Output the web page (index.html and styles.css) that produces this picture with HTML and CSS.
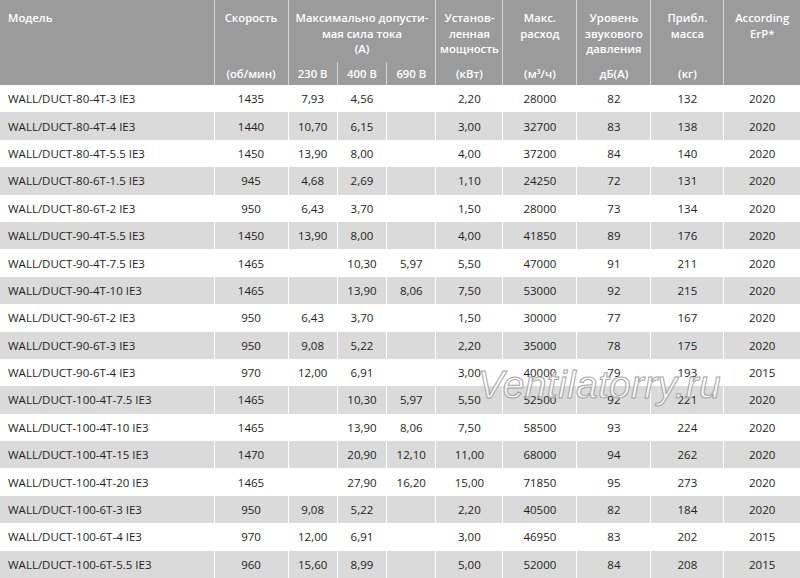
FILE: index.html
```html
<!DOCTYPE html>
<html lang="ru">
<head>
<meta charset="utf-8">
<title>WALL/DUCT</title>
<link rel="stylesheet" href="styles.css">
</head>
<body>
<div class="sheet">
<table class="spec">
  <colgroup>
    <col class="c-model"><col class="c-speed"><col class="c-a"><col class="c-a"><col class="c-a">
    <col class="c-pow"><col class="c-flow"><col class="c-noise"><col class="c-mass"><col class="c-erp">
  </colgroup>
  <thead>
    <tr class="h1">
      <th class="left" rowspan="2">Модель</th>
      <th>Скорость</th>
      <th colspan="3">Максимально допусти-<br>мая сила тока<br>(А)</th>
      <th>Установ-<br>ленная<br>мощность</th>
      <th>Макс.<br>расход</th>
      <th>Уровень<br>звукового<br>давления</th>
      <th>Прибл.<br>масса</th>
      <th rowspan="2">According<br>ErP*</th>
    </tr>
    <tr class="h2">
      <th>(об/мин)</th>
      <th>230 В</th>
      <th>400 В</th>
      <th>690 В</th>
      <th>(кВт)</th>
      <th>(м<sup>3</sup>/ч)</th>
      <th>дБ(А)</th>
      <th>(кг)</th>
    </tr>
  </thead>
  <tbody>
    <tr><td class="left">WALL/DUCT-80-4T-3 IE3</td><td>1435</td><td>7,93</td><td>4,56</td><td></td><td>2,20</td><td>28000</td><td>82</td><td>132</td><td>2020</td></tr>
    <tr><td class="left">WALL/DUCT-80-4T-4 IE3</td><td>1440</td><td>10,70</td><td>6,15</td><td></td><td>3,00</td><td>32700</td><td>83</td><td>138</td><td>2020</td></tr>
    <tr><td class="left">WALL/DUCT-80-4T-5.5 IE3</td><td>1450</td><td>13,90</td><td>8,00</td><td></td><td>4,00</td><td>37200</td><td>84</td><td>140</td><td>2020</td></tr>
    <tr><td class="left">WALL/DUCT-80-6T-1.5 IE3</td><td>945</td><td>4,68</td><td>2,69</td><td></td><td>1,10</td><td>24250</td><td>72</td><td>131</td><td>2020</td></tr>
    <tr><td class="left">WALL/DUCT-80-6T-2 IE3</td><td>950</td><td>6,43</td><td>3,70</td><td></td><td>1,50</td><td>28000</td><td>73</td><td>134</td><td>2020</td></tr>
    <tr><td class="left">WALL/DUCT-90-4T-5.5 IE3</td><td>1450</td><td>13,90</td><td>8,00</td><td></td><td>4,00</td><td>41850</td><td>89</td><td>176</td><td>2020</td></tr>
    <tr><td class="left">WALL/DUCT-90-4T-7.5 IE3</td><td>1465</td><td></td><td>10,30</td><td>5,97</td><td>5,50</td><td>47000</td><td>91</td><td>211</td><td>2020</td></tr>
    <tr><td class="left">WALL/DUCT-90-4T-10 IE3</td><td>1465</td><td></td><td>13,90</td><td>8,06</td><td>7,50</td><td>53000</td><td>92</td><td>215</td><td>2020</td></tr>
    <tr><td class="left">WALL/DUCT-90-6T-2 IE3</td><td>950</td><td>6,43</td><td>3,70</td><td></td><td>1,50</td><td>30000</td><td>77</td><td>167</td><td>2020</td></tr>
    <tr><td class="left">WALL/DUCT-90-6T-3 IE3</td><td>950</td><td>9,08</td><td>5,22</td><td></td><td>2,20</td><td>35000</td><td>78</td><td>175</td><td>2020</td></tr>
    <tr><td class="left">WALL/DUCT-90-6T-4 IE3</td><td>970</td><td>12,00</td><td>6,91</td><td></td><td>3,00</td><td>40000</td><td>79</td><td>193</td><td>2015</td></tr>
    <tr><td class="left">WALL/DUCT-100-4T-7.5 IE3</td><td>1465</td><td></td><td>10,30</td><td>5,97</td><td>5,50</td><td>52500</td><td>92</td><td>221</td><td>2020</td></tr>
    <tr><td class="left">WALL/DUCT-100-4T-10 IE3</td><td>1465</td><td></td><td>13,90</td><td>8,06</td><td>7,50</td><td>58500</td><td>93</td><td>224</td><td>2020</td></tr>
    <tr><td class="left">WALL/DUCT-100-4T-15 IE3</td><td>1470</td><td></td><td>20,90</td><td>12,10</td><td>11,00</td><td>68000</td><td>94</td><td>262</td><td>2020</td></tr>
    <tr><td class="left">WALL/DUCT-100-4T-20 IE3</td><td>1465</td><td></td><td>27,90</td><td>16,20</td><td>15,00</td><td>71850</td><td>95</td><td>273</td><td>2020</td></tr>
    <tr><td class="left">WALL/DUCT-100-6T-3 IE3</td><td>950</td><td>9,08</td><td>5,22</td><td></td><td>2,20</td><td>40500</td><td>82</td><td>184</td><td>2020</td></tr>
    <tr><td class="left">WALL/DUCT-100-6T-4 IE3</td><td>970</td><td>12,00</td><td>6,91</td><td></td><td>3,00</td><td>46950</td><td>83</td><td>202</td><td>2015</td></tr>
    <tr><td class="left">WALL/DUCT-100-6T-5.5 IE3</td><td>960</td><td>15,60</td><td>8,99</td><td></td><td>5,00</td><td>52000</td><td>84</td><td>208</td><td>2015</td></tr>
  </tbody>
</table>
<div class="watermark">Ventilatorry.ru</div>
</div>
</body>
</html>
```

FILE: styles.css
```css
html, body {
  margin: 0;
  padding: 0;
  background: #ffffff;
}
.sheet {
  position: relative;
  width: 800px;
  height: 578px;
  overflow: hidden;
}
.spec {
  width: 800px;
  border-collapse: collapse;
  table-layout: fixed;
  font-family: "Open Sans", "Liberation Sans", sans-serif;
  font-size: 11.5px;
  color: #231f20;
}
.c-model { width: 214px; }
.c-speed { width: 74px; }
.c-a { width: 49.3px; }
.c-pow { width: 67px; }
.c-flow { width: 74px; }
.c-noise { width: 74px; }
.c-mass { width: 73px; }
.c-erp { width: 76px; }

.spec th {
  background: #9b9b9b;
  color: #ffffff;
  font-weight: 600;
  font-size: 11.3px;
  text-align: center;
  padding: 0 2px;
  border-left: 1px solid #d6d6d6;
  line-height: 15.5px;
}
.spec th.left {
  text-align: left;
  padding-left: 8px;
  border-left: none;
}
.h1 { height: 62px; }
.h1 th { vertical-align: top; padding-top: 10px; }
.h2 { height: 23px; }
.h2 th { vertical-align: middle; }
.spec sup { font-size: 7px; line-height: 0; vertical-align: 4px; }

.spec tbody tr { height: 27.4px; }
.spec tbody tr:nth-child(even) td { background: #dadada; }
.spec td {
  padding: 0 2px;
  text-align: center;
  vertical-align: middle;
  border-left: 1px solid #ffffff;
  white-space: nowrap;
}
.spec td.left {
  text-align: left;
  padding-left: 8px;
  border-left: none;
}

.watermark {
  position: absolute;
  left: 478px;
  top: 365px;
  font-family: "Liberation Sans", Arial, sans-serif;
  font-style: italic;
  font-size: 39px;
  line-height: 39px;
  color: rgba(255, 255, 255, 0.7);
  -webkit-text-stroke: 1px #a4a4a4;
  letter-spacing: 0.3px;
  pointer-events: none;
}
```
